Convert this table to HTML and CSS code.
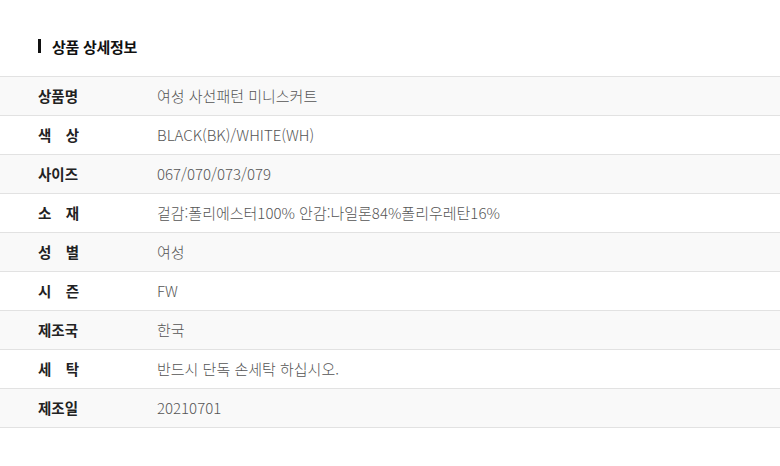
FILE: index.html
```html
<!DOCTYPE html>
<html lang="ko">
<head>
<meta charset="utf-8">
<link rel="stylesheet" href="styles.css">
</head>
<body>
<div class="wrap">
  <h2 class="title"><span class="bar"></span>상품 상세정보</h2>
  <div class="table">
    <div class="row alt"><div class="th">상품명</div><div class="td">여성 사선패턴 미니스커트</div></div>
    <div class="row"><div class="th">색&emsp;상</div><div class="td">BLACK(BK)/WHITE(WH)</div></div>
    <div class="row alt"><div class="th">사이즈</div><div class="td">067/070/073/079</div></div>
    <div class="row"><div class="th">소&emsp;재</div><div class="td">겉감:폴리에스터100% 안감:나일론84%폴리우레탄16%</div></div>
    <div class="row alt"><div class="th">성&emsp;별</div><div class="td">여성</div></div>
    <div class="row"><div class="th">시&emsp;즌</div><div class="td">FW</div></div>
    <div class="row alt"><div class="th">제조국</div><div class="td">한국</div></div>
    <div class="row"><div class="th">세&emsp;탁</div><div class="td">반드시 단독 손세탁 하십시오.</div></div>
    <div class="row alt"><div class="th">제조일</div><div class="td">20210701</div></div>
  </div>
</div>
</body>
</html>
```
FILE: styles.css
```css
html, body { margin: 0; padding: 0; background: #fff; }
body { font-family: "Noto Sans CJK KR", "Noto Sans", sans-serif; color: #222; }
.wrap { padding-top: 36px; }
.title {
  margin: 0 0 0 38px;
  height: 20px;
  display: flex;
  align-items: center;
  font-size: 15px;
  font-weight: 700;
  color: #111;
  letter-spacing: -0.3px;
}
.bar { width: 3px; height: 14px; background: #111; margin-right: 11px; }
.table { margin-top: 20px; border-top: 1px solid #e2e2e2; }
.row {
  display: flex;
  align-items: center;
  height: 38px;
  border-bottom: 1px solid #e2e2e2;
}
.row.alt { background: #f9f9f9; }
.th {
  width: 119px;
  padding-left: 38px;
  font-size: 14.5px;
  font-weight: 700;
  color: #222;
  margin-top: -2px;
}
.td {
  font-size: 15px;
  font-weight: 300;
  color: #555;
  margin-top: -2px;
}
```
